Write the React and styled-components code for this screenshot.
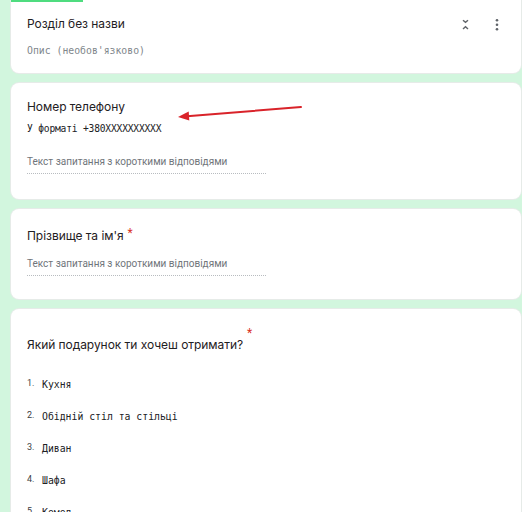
import React from "react";
import styled, { createGlobalStyle } from "styled-components";

const Global = createGlobalStyle`
  html, body {
    margin: 0;
    padding: 0;
    background: #d2f6de;
  }
  body {
    font-family: Roboto, "Noto Sans", sans-serif;
    color: #202124;
  }
`;

const Page = styled.div`
  display: flex;
  flex-direction: column;
  gap: 10px;
  padding: 0 1px 0 11px;
  height: 512px;
  overflow: hidden;
`;

const Card = styled.section`
  position: relative;
  flex: none;
  background: #fff;
  border-radius: ${(p) => (p.$flatTop ? "0 0 8px 8px" : "8px")};
  box-shadow: 0 0 0 1px #e6ebe8;
  min-height: ${(p) => p.$h}px;
  box-sizing: border-box;
  padding: ${(p) => p.$pad};
  display: flex;
  flex-direction: column;
`;

const TopStripe = styled.div`
  position: absolute;
  top: 0;
  left: 0;
  width: 72px;
  height: 2px;
  background: #4fdc7f;
`;

const Header = styled.div`
  display: flex;
  align-items: flex-start;
  justify-content: space-between;
`;

const Title = styled.div`
  font-family: Inter, "Open Sans", sans-serif;
  font-size: 12px;
  line-height: 16px;
  font-weight: 400;
  color: #1f2023;
  letter-spacing: -0.05px;
`;

const Required = styled.span`
  color: #d93025;
  font-family: Roboto, sans-serif;
  font-size: 12px;
  line-height: 12px;
  margin-left: 4px;
  vertical-align: 3px;
`;

const IconGroup = styled.div`
  display: flex;
  gap: 8px;
  margin-top: -3px;
`;

const IconButton = styled.div`
  width: 24px;
  height: 24px;
  display: flex;
  align-items: center;
  justify-content: center;
`;

const Mono = styled.div`
  font-family: "DejaVu Sans Mono", "Liberation Mono", monospace;
  font-size: ${(p) => p.$size || 9.8}px;
  line-height: 16px;
  color: ${(p) => p.$color || "#202124"};
  margin-top: ${(p) => p.$mt || 0}px;
  letter-spacing: ${(p) => p.$ls || 0}px;
`;

const ShortAnswer = styled.div`
  width: 239px;
  margin-top: ${(p) => p.$mt}px;
  padding-bottom: 4px;
  border-bottom: 1px dotted #b8bcc0;
  font-family: Roboto, sans-serif;
  font-size: 10px;
  line-height: 14px;
  color: #70757a;
`;

const QuestionHead = styled.div`
  display: flex;
  align-items: flex-start;
`;

const HeadTitle = styled(Title)`
  margin-top: 10px;
`;

const HeadStar = styled.span`
  color: #d93025;
  font-family: Roboto, sans-serif;
  font-size: 12px;
  line-height: 12px;
  margin-left: 4px;
`;

const OptionList = styled.ol`
  list-style: none;
  margin: 24px 0 0;
  padding: 0;
  display: flex;
  flex-direction: column;
  gap: 16px;
`;

const Option = styled.li`
  display: flex;
  align-items: center;
  height: 16px;
`;

const OptionNum = styled.span`
  width: 15px;
  font-family: Roboto, sans-serif;
  font-size: 9px;
  line-height: 9px;
  color: #3c4043;
  align-self: flex-start;
  margin-top: 2px;
`;

const Arrow = styled.svg`
  position: absolute;
  left: 160px;
  top: 16px;
  width: 136px;
  height: 26px;
  overflow: visible;
`;

const CollapseIcon = () => (
  <svg width="24" height="24" viewBox="0 0 24 24" fill="none">
    <path d="M10 7.2 L12.5 9.4 L15 7.2" stroke="#5f6368" strokeWidth="1.4" />
    <path d="M10 16 L12.5 13.8 L15 16" stroke="#5f6368" strokeWidth="1.4" />
  </svg>
);

const MoreIcon = () => (
  <svg width="24" height="24" viewBox="0 0 24 24">
    <circle cx="12" cy="7.3" r="1.3" fill="#5f6368" />
    <circle cx="12" cy="11.8" r="1.3" fill="#5f6368" />
    <circle cx="12" cy="16.3" r="1.3" fill="#5f6368" />
  </svg>
);

const options = [
  "Кухня",
  "Обідній стіл та стільці",
  "Диван",
  "Шафа",
  "Комод",
];

export default function App() {
  return (
    <>
      <Global />
      <Page>
        <Card $h={73} $pad="16px 12px 0 16px" $flatTop>
          <TopStripe />
          <Header>
            <Title>Розділ без назви</Title>
            <IconGroup>
              <IconButton>
                <CollapseIcon />
              </IconButton>
              <IconButton>
                <MoreIcon />
              </IconButton>
            </IconGroup>
          </Header>
          <Mono $color="#80868b" $mt={6} $size={9.8}>
            Опис (необов'язково)
          </Mono>
        </Card>

        <Card $h={116} $pad="16px 16px 0">
          <Title>Номер телефону</Title>
          <Mono $mt={6} $size={9.6} $ls={-0.18}>
            У форматі +380XXXXXXXXXX
          </Mono>
          <ShortAnswer $mt={18}>Текст запитання з короткими відповідями</ShortAnswer>
          <Arrow viewBox="0 0 136 26">
            <line x1="130" y1="8" x2="16" y2="17.3" stroke="#d9232a" strokeWidth="2" strokeLinecap="round" />
            <polygon points="7,18 18.3,21.6 17.7,12.6" fill="#d9232a" />
          </Arrow>
        </Card>

        <Card $h={90} $pad="18px 16px 0">
          <Title>
            Прізвище та ім'я<Required>*</Required>
          </Title>
          <ShortAnswer $mt={13}>Текст запитання з короткими відповідями</ShortAnswer>
        </Card>

        <Card $h={260} $pad="18px 16px 0">
          <QuestionHead>
            <HeadTitle>Який подарунок ти хочеш отримати?</HeadTitle>
            <HeadStar>*</HeadStar>
          </QuestionHead>
          <OptionList>
            {options.map((o, i) => (
              <Option key={o}>
                <OptionNum>{i + 1}.</OptionNum>
                <Mono>{o}</Mono>
              </Option>
            ))}
          </OptionList>
        </Card>
      </Page>
    </>
  );
}
